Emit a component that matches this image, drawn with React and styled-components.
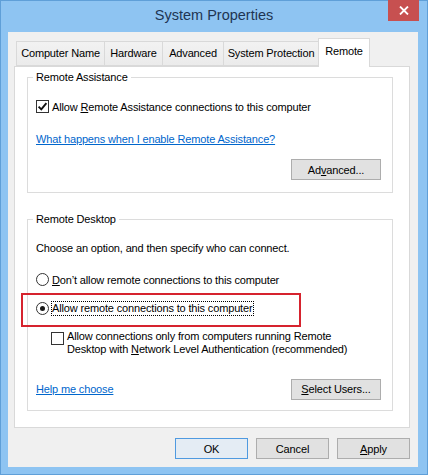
import React from 'react'
import styled, { createGlobalStyle } from 'styled-components'

const GlobalStyle = createGlobalStyle`
  html, body {
    margin: 0;
    padding: 0;
    background: #8ec4f2;
  }
  * {
    box-sizing: border-box;
  }
`

const Window = styled.div`
  position: relative;
  width: 428px;
  height: 475px;
  display: flex;
  flex-direction: column;
  padding: 0 9px 7px 7px;
  background: #8ec4f2;
  border: 1px solid #5f9fd8;
  font-family: "Liberation Sans", Arial, sans-serif;
  font-size: 11px;
  letter-spacing: -0.15px;
  color: #000;
`

const TitleBar = styled.div`
  height: 31px;
  display: flex;
  align-items: center;
  justify-content: center;
  padding-left: 2px;
  padding-bottom: 3px;
  font-size: 14.5px;
  letter-spacing: 0;
  color: #1e3552;
`

const CloseButton = styled.div`
  position: absolute;
  top: -1px;
  right: 8px;
  width: 31px;
  height: 21px;
  background: #c75050;
  display: flex;
  align-items: center;
  justify-content: center;
`

const Body = styled.div`
  flex: 1;
  display: flex;
  flex-direction: column;
  padding: 6px 8px 0 6px;
  background: #f0f0f0;
`

const TabRow = styled.div`
  display: flex;
  align-items: flex-end;
  height: 28px;
  padding-left: 2px;
  position: relative;
  z-index: 1;
`

const Tab = styled.div`
  width: ${(p) => p.w}px;
  height: ${(p) => (p.active ? 29 : 25)}px;
  margin-left: ${(p) => (p.first ? 0 : -1)}px;
  margin-bottom: ${(p) => (p.active ? -1 : 0)}px;
  display: flex;
  align-items: center;
  justify-content: center;
  padding-bottom: ${(p) => (p.active ? 4 : 1)}px;
  border: 1px solid #d9d9d9;
  border-bottom: ${(p) => (p.active ? 'none' : '1px solid #d9d9d9')};
  background: ${(p) => (p.active ? '#fff' : 'linear-gradient(#f2f2f2, #ebebeb)')};
  white-space: nowrap;
`

const Panel = styled.div`
  height: 362px;
  display: flex;
  flex-direction: column;
  gap: 19px;
  padding: 3px 16px 0 12px;
  background: #fff;
  border: 1px solid #d9d9d9;
`

const Group = styled.fieldset`
  margin: 0;
  min-width: 0;
  padding: 0 11px ${(p) => p.pb}px 8px;
  border: 1px solid #dcdcdc;
  display: flex;
  flex-direction: column;
`

const Legend = styled.legend`
  margin-left: -3px;
  padding: 0 3px;
  line-height: 15px;
`

const Row = styled.div`
  position: relative;
  display: flex;
  align-items: center;
  gap: 3px;
  height: 15px;
  margin-top: ${(p) => p.mt}px;
`

const Text = styled.div`
  line-height: 15px;
  margin-top: ${(p) => p.mt}px;
`

const Box = styled.span`
  width: 13px;
  height: 13px;
  flex: none;
  border: 1px solid #333;
  background: #fff;
  border-radius: ${(p) => (p.round ? '50%' : '0')};
  display: flex;
  align-items: center;
  justify-content: center;
  align-self: ${(p) => (p.top ? 'flex-start' : 'center')};
  margin-top: ${(p) => (p.top ? 2 : 0)}px;
`

const Dot = styled.span`
  width: 5px;
  height: 5px;
  border-radius: 50%;
  background: #1a1a1a;
`

const Focus = styled.span`
  outline: 1px dotted #000;
  outline-offset: 0;
  line-height: 13px;
`

const Highlight = styled.div`
  position: absolute;
  left: -15px;
  top: -8px;
  width: 280px;
  height: 34px;
  border: 2px solid #d6232e;
  pointer-events: none;
`

const Block = styled.div`
  display: flex;
  gap: 3px;
  margin-top: ${(p) => p.mt}px;
  margin-left: 15px;
`

const BlockText = styled.div`
  line-height: 13.3px;
`

const Link = styled.a`
  color: #0066cc;
  text-decoration: underline;
  line-height: 15px;
  cursor: pointer;
`

const Key = styled.span`
  text-decoration: underline;
`

const ButtonRow = styled.div`
  display: flex;
  align-items: center;
  justify-content: ${(p) => (p.between ? 'space-between' : 'flex-end')};
  gap: 8px;
  margin-top: ${(p) => p.mt}px;
`

const Button = styled.div`
  width: ${(p) => p.w}px;
  height: 21px;
  display: flex;
  align-items: center;
  justify-content: center;
  background: ${(p) => (p.primary ? '#e4ecf4' : '#e1e1e1')};
  border: 1px solid ${(p) => (p.primary ? '#4f9ae0' : '#adadad')};
  color: #000;
`

const Footer = styled(ButtonRow)`
  margin-top: 10px;
`

const tabs = [
  { label: 'Computer Name', w: 89 },
  { label: 'Hardware', w: 59 },
  { label: 'Advanced', w: 62 },
  { label: 'System Protection', w: 96 },
  { label: 'Remote', w: 52, active: true },
]

const Check = () => (
  <svg width="11" height="11" viewBox="0 0 11 11">
    <path d="M1.6 5.6 L4.3 8.3 L9.4 2.2" fill="none" stroke="#111" strokeWidth="1.9" />
  </svg>
)

export default function App() {
  return (
    <>
      <GlobalStyle />
      <Window>
        <TitleBar>System Properties</TitleBar>
        <CloseButton>
          <svg width="10" height="9" viewBox="0 0 10 9">
            <path d="M1 0.5 L9 8.5 M9 0.5 L1 8.5" stroke="#fff" strokeWidth="1.8" />
          </svg>
        </CloseButton>
        <Body>
          <TabRow>
            {tabs.map((t, i) => (
              <Tab key={t.label} w={t.w} active={t.active} first={i === 0}>
                {t.label}
              </Tab>
            ))}
          </TabRow>
          <Panel>
            <Group pb={12}>
              <Legend>Remote Assistance</Legend>
              <Row mt={14}>
                <Box>
                  <Check />
                </Box>
                <span>
                  Allow <Key>R</Key>emote Assistance connections to this computer
                </span>
              </Row>
              <Text mt={18}>
                <Link>What happens when I enable Remote Assistance?</Link>
              </Text>
              <ButtonRow mt={12}>
                <Button w={90}>
                  Ad<Key>v</Key>anced...
                </Button>
              </ButtonRow>
            </Group>

            <Group pb={10}>
              <Legend>Remote Desktop</Legend>
              <Text mt={14}>Choose an option, and then specify who can connect.</Text>
              <Row mt={16}>
                <Box round />
                <span>
                  <Key>D</Key>on’t allow remote connections to this computer
                </span>
              </Row>
              <Row mt={14}>
                <Box round>
                  <Dot />
                </Box>
                <Focus>Allow remote connections to this computer</Focus>
                <Highlight />
              </Row>
              <Block mt={14}>
                <Box top />
                <BlockText>
                  Allow connections only from computers running Remote
                  <br />
                  Desktop with <Key>N</Key>etwork Level Authentication (recommended)
                </BlockText>
              </Block>
              <ButtonRow between mt={22}>
                <Link>Help me choose</Link>
                <Button w={90}>
                  <Key>S</Key>elect Users...
                </Button>
              </ButtonRow>
            </Group>
          </Panel>
          <Footer>
            <Button primary w={73}>OK</Button>
            <Button w={73}>Cancel</Button>
            <Button w={73}>
              <Key>A</Key>pply
            </Button>
          </Footer>
        </Body>
      </Window>
    </>
  )
}
